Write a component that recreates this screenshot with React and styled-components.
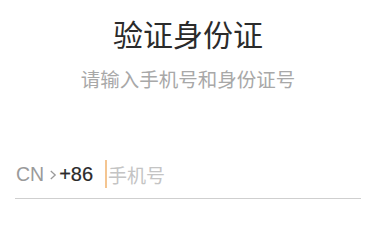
import React from "react";
import styled, { createGlobalStyle } from "styled-components";

const GlobalStyle = createGlobalStyle`
  html, body {
    margin: 0;
    padding: 0;
    background: #fff;
  }
  body {
    font-family: "Liberation Sans", "Noto Sans CJK SC", sans-serif;
  }
`;

// page wrapper, content is a bit off centre like the reference
const Page = styled.div`
  padding: 18px 23px 0 15px;
  display: flex;
  flex-direction: column;
`;

const Title = styled.h1`
  margin: 0;
  text-align: center;
  font-size: 30px;
  line-height: 30px;
  font-weight: 400;
  color: #2b2b2b;
  font-family: "Noto Sans CJK SC", sans-serif;
`;

const SubTitle = styled.p`
  margin: 21px 0 0;
  text-align: center;
  font-size: 19.5px;
  line-height: 19px;
  color: #a8a8a8;
  font-family: "Noto Sans CJK SC", sans-serif;
`;

// phone number row with underline
const PhoneRow = styled.div`
  margin-top: 72px;
  padding: 0 0 10px 1px;
  height: 28px;
  display: flex;
  align-items: center;
  border-bottom: 1px solid #cfcfcf;
`;

const Country = styled.span`
  font-size: 19.5px;
  color: #9a9a9a;
`;

const Chevron = styled.svg`
  width: 8px;
  height: 10px;
  margin: 1px 2px 0 5px;
`;

const Code = styled.span`
  font-size: 20px;
  color: #2a2a2a;
  margin-right: 12px;
  -webkit-text-stroke: 0.2px #2a2a2a;
`;

const Caret = styled.span`
  width: 2px;
  height: 28px;
  background: #f4c591;
`;

const PhoneInput = styled.input`
  flex: 1;
  border: none;
  outline: none;
  padding: 0 0 0 1px;
  margin: 0;
  background: transparent;
  font-size: 19px;
  font-family: "Noto Sans CJK SC", sans-serif;
  color: #333;
  caret-color: transparent;

  &::placeholder {
    color: #c4c4c4;
  }
`;

const App = () => {
  return (
    <>
      <GlobalStyle />
      <Page>
        <Title>验证身份证</Title>
        <SubTitle>请输入手机号和身份证号</SubTitle>
        <PhoneRow>
          <Country>CN</Country>
          <Chevron viewBox="0 0 8 10">
            <path d="M1.8 1 L6.2 5 L1.8 9" fill="none" stroke="#9a9a9a" strokeWidth="1.3" />
          </Chevron>
          <Code>+86</Code>
          <Caret />
          <PhoneInput type="tel" placeholder="手机号" />
        </PhoneRow>
      </Page>
    </>
  );
};

export default App;
